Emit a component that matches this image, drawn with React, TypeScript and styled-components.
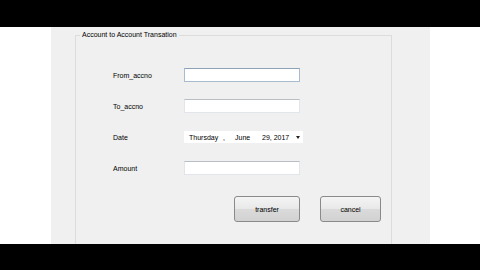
import React from "react";
import styled, { createGlobalStyle } from "styled-components";

const Global = createGlobalStyle`
  html, body {
    margin: 0;
    padding: 0;
    background: #ffffff;
  }
  * {
    box-sizing: border-box;
  }
`;

function App() {
  return (
    <>
      <Global />
      <Screen>
        <BlackBar $h={27} />
        <Middle>
          <Window>
            <GroupBox>
              <Legend>Account to Account Transation</Legend>
              <Form>
                <Row>
                  <Label>From_accno</Label>
                  <TextBox $focused />
                </Row>
                <Row>
                  <Label>To_accno</Label>
                  <TextBox />
                </Row>
                <Row>
                  <Label>Date</Label>
                  <DatePicker>
                    <DatePart $w={34}>Thursday</DatePart>
                    <DatePart $w={12}>,</DatePart>
                    <DatePart $w={27}>June</DatePart>
                    <DatePart $w={30}>29, 2017</DatePart>
                    <Arrow />
                  </DatePicker>
                </Row>
                <Row>
                  <Label>Amount</Label>
                  <TextBox />
                </Row>
                <Buttons>
                  <Button $w={66}>transfer</Button>
                  <Button $w={61}>cancel</Button>
                </Buttons>
              </Form>
            </GroupBox>
          </Window>
        </Middle>
        <BlackBar $h={26} />
      </Screen>
    </>
  );
}

const Screen = styled.div`
  width: 480px;
  height: 270px;
  display: flex;
  flex-direction: column;
  font-family: "Liberation Sans", Arial, sans-serif;
  font-size: 7px;
  color: #000000;
  -webkit-font-smoothing: antialiased;
`;

const BlackBar = styled.div<{ $h: number }>`
  height: ${(p) => p.$h}px;
  background: #000000;
  flex: none;
`;

const Middle = styled.div`
  flex: 1;
  display: flex;
  background: #ffffff;
  padding-left: 51px;
  overflow: hidden;
`;

const Window = styled.div`
  width: 379px;
  background: #f0f0f0;
  padding: 4px 38px 0 24px;
  display: flex;
`;

const GroupBox = styled.fieldset`
  flex: 1;
  margin: 0;
  padding: 0;
  border: 1px solid #dcdcdc;
  border-bottom: none;
  min-width: 0;
`;

const Legend = styled.legend`
  margin-left: 4px;
  padding: 0 2px;
  font-size: 7px;
  line-height: 8px;
`;

const Form = styled.div`
  display: flex;
  flex-direction: column;
  padding: 29px 0 0 37px;
  gap: 17px;
`;

const Row = styled.div`
  display: flex;
  align-items: center;
  height: 14px;
`;

const Label = styled.div`
  width: 71px;
  font-size: 7px;
`;

const TextBox = styled.div<{ $focused?: boolean }>`
  width: 116px;
  height: 14px;
  background: #ffffff;
  border: 1px solid ${(p) => (p.$focused ? "#a9bccf" : "#e2e6ea")};
  border-top-color: ${(p) => (p.$focused ? "#8ea3b8" : "#b9bec4")};
`;

const DatePicker = styled.div`
  width: 119px;
  height: 12px;
  background: #ffffff;
  display: flex;
  align-items: center;
  padding-left: 5px;
  font-size: 7px;
`;

const DatePart = styled.span<{ $w: number }>`
  width: ${(p) => p.$w}px;
  flex: none;
  white-space: nowrap;
`;

const Arrow = styled.span`
  margin-left: 4px;
  width: 0;
  height: 0;
  border-left: 2.5px solid transparent;
  border-right: 2.5px solid transparent;
  border-top: 3px solid #222222;
`;

const Buttons = styled.div`
  display: flex;
  gap: 20px;
  padding-left: 121px;
  margin-top: 4px;
`;

const Button = styled.button<{ $w: number }>`
  width: ${(p) => p.$w}px;
  height: 26px;
  border: 1px solid #8a8a8a;
  border-radius: 3px;
  background: linear-gradient(#f4f4f4, #e8e8e8 50%, #dadada 51%, #d2d2d2);
  font-family: "Liberation Sans", Arial, sans-serif;
  font-size: 7px;
  color: #000000;
  padding: 0;
`;

export default App;
